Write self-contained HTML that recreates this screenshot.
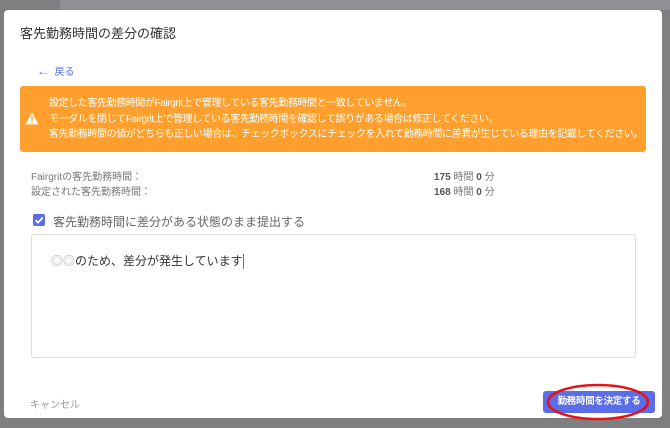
<!DOCTYPE html>
<html><head><meta charset="utf-8"><style>
*{margin:0;padding:0;box-sizing:border-box}
body{width:670px;height:428px;background:#7f7f82;font-family:"Liberation Sans","Noto Sans CJK JP",sans-serif;position:relative;overflow:hidden}
.top{position:absolute;left:60px;top:0;width:610px;height:10px;background:#909094}
.modal{position:absolute;left:4px;top:10px;width:658px;height:408px;background:#fff;border-radius:4px}
.abs{position:absolute;white-space:nowrap}
</style></head><body>
<div class="top"></div>
<div class="modal"></div>
<div class="abs" style="left:20px;top:23px;font-size:13px;color:#333">客先勤務時間の差分の確認</div>
<div class="abs" style="left:37px;top:63px;font-size:10px;color:#5a6ee0"><span style="font-size:12px;font-weight:bold">←</span>&nbsp;&nbsp;戻る</div>
<div class="abs" style="left:20px;top:86px;width:626px;height:66px;background:#ffa02e;border-radius:3px"></div>
<svg class="abs" style="left:25px;top:112px" width="14" height="13" viewBox="0 0 14 13"><path d="M7 0.5L13.5 12.5H0.5Z" fill="#fff"/><rect x="6.3" y="4" width="1.4" height="5" fill="#ffa02e"/><rect x="6.3" y="10" width="1.4" height="1.4" fill="#ffa02e"/></svg>
<div class="abs" style="left:49px;top:96px;font-size:10px;letter-spacing:-0.4px;line-height:15.5px;color:#fff">設定した客先勤務時間がFairgrit上で管理している客先勤務時間と一致していません。<br>モーダルを閉じてFairgrit上で管理している客先勤務時間を確認して誤りがある場合は修正してください。<br>客先勤務時間の値がどちらも正しい場合は、チェックボックスにチェックを入れて勤務時間に差異が生じている理由を記載してください。</div>
<div class="abs" style="left:31px;top:170px;font-size:10px;line-height:15px;color:#777">Fairgritの客先勤務時間：<br>設定された客先勤務時間：</div>
<div class="abs" style="left:434px;top:170px;font-size:10px;line-height:15px;color:#777"><b style="color:#555">175</b> 時間 <b style="color:#555">0</b> 分<br><b style="color:#555">168</b> 時間 <b style="color:#555">0</b> 分</div>
<div class="abs" style="left:33px;top:214px;width:12px;height:12px;background:#5a6ee0;border-radius:2px"></div>
<svg class="abs" style="left:33px;top:214px" width="12" height="12"><path d="M2.5 6.2L5 8.6L9.6 3.6" stroke="#fff" stroke-width="1.8" fill="none"/></svg>
<div class="abs" style="left:53px;top:213px;font-size:12px;color:#666">客先勤務時間に差分がある状態のまま提出する</div>
<div class="abs" style="left:31px;top:234px;width:605px;height:124px;border:1px solid #ddd;border-radius:3px"></div>
<div class="abs" style="left:51px;top:252px;font-size:12px;color:#333"><span style="color:#aaa">◎◎</span>のため、差分が発生しています<span style="display:inline-block;width:1px;height:15px;background:#5a6ee0;vertical-align:middle"></span></div>
<div class="abs" style="left:30px;top:396px;font-size:10px;color:#999">キャンセル</div>
<div class="abs" style="left:543px;top:391px;width:112px;height:22px;background:#5b6ee9;border-radius:3px;color:#fff;font-size:9.5px;letter-spacing:-0.3px;font-weight:bold;text-align:center;line-height:22px">勤務時間を決定する</div>
<svg class="abs" style="left:545px;top:382px" width="106" height="40"><ellipse cx="53" cy="20" rx="50" ry="17" fill="none" stroke="#e8101a" stroke-width="2.5"/></svg>
</body></html>
